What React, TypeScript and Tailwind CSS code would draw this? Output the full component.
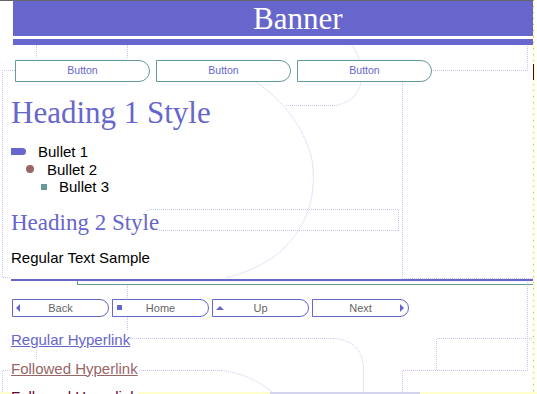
import React from "react";

const sans = { fontFamily: '"Liberation Sans", Arial, sans-serif' };
const serif = { fontFamily: '"Liberation Serif", "Times New Roman", serif' };

function Decor() {
  const s = {
    stroke: "#c6c6f6",
    strokeWidth: 1,
    strokeDasharray: "1 1",
    fill: "none",
  } as const;
  return (
    <svg
      className="absolute inset-0 z-0"
      width={537}
      height={394}
      viewBox="0 0 537 394"
    >
      <g {...s} shapeRendering="crispEdges">
        <path d="M36.5 45 V58" />
        <path d="M127.5 45 V58" />
        <path d="M15 70.5 H2.5 V277.5 H11" />
        <path d="M402.5 82 V278.5 H533" />
        <path d="M433 70.5 H527.5 V45" />
        <path d="M147.5 230.5 V209.5 H398.5 V230.5 H147.5" />
        <path d="M127.5 285 V338.5 H333" />
        <path d="M36.5 338 V370.5 M2.5 394 V370.5 H222" />
        <path d="M527.5 280 V370.5 H402.5 V394" />
        <path d="M436.5 370 V338.5 H533" />
      </g>
      <g {...s}>
        <path d="M250 78 Q300 110 312 160 Q320 215 280 252 Q258 270 225 278" />
        <path d="M286 105.5 H336 Q361 100 362 75 Q361 58 352 45" />
        <path d="M333 338.5 Q362 340 363.5 368 V394" />
        <path d="M222 370.5 Q250 374 272 392" />
      </g>
      <rect x={533} y={0} width={2} height={394} fill="#ffffcc" />
      <path
        d="M533.5 0 V394"
        stroke="#b0b0c8"
        strokeWidth={1}
        strokeDasharray="1 5"
        shapeRendering="crispEdges"
      />
      <rect x={533} y={64} width={1} height={16} fill="#660000" />
      <rect x={0} y={392} width={537} height={2} fill="#ffffcc" />
      <rect x={270} y={392} width={150} height={2} fill="#d4d4ee" />
    </svg>
  );
}

function TopButton() {
  return (
    <div
      className="w-[135px] h-[22px] border border-[#669999] rounded-r-[11px] bg-white flex items-center justify-center text-[10.5px] text-[#6666cc]"
      style={sans}
    >
      Button
    </div>
  );
}

function NavButton({
  label,
  icon,
  iconRight,
}: {
  label: string;
  icon: React.ReactNode;
  iconRight?: boolean;
}) {
  return (
    <div
      className="w-[97px] h-[18px] border border-[#6666cc] rounded-r-[9px] bg-white grid grid-cols-[16px_1fr_16px] items-center text-[11px] text-[#666666]"
      style={sans}
    >
      <div className="flex items-center pl-[3px]">{!iconRight && icon}</div>
      <div className="text-center leading-[16px]">{label}</div>
      <div className="flex items-center justify-end pr-[4px]">
        {iconRight && icon}
      </div>
    </div>
  );
}

export default function App() {
  return (
    <div
      className="relative w-[537px] h-[394px] overflow-hidden bg-white"
      style={sans}
    >
      <Decor />
      <div className="relative z-10 flex flex-col">
        <div className="h-[1px] w-[533px] bg-[#666666]" />
        <div className="ml-[13px] w-[520px] h-[35px] bg-[#6666cc] pl-[240px]">
          <span
            className="text-[31px] leading-[35px] text-white"
            style={serif}
          >
            Banner
          </span>
        </div>
        <div className="h-[3px]" />
        <div className="ml-[13px] w-[520px] h-[6px] bg-[#6666cc]" />

        <div className="mt-[15px] ml-[15px] flex gap-[6px]">
          <TopButton />
          <TopButton />
          <TopButton />
        </div>

        <div
          className="mt-[15px] ml-[11px] self-start text-[31px] leading-[31px] text-[#6666cc]"
          style={serif}
        >
          Heading 1 Style
        </div>

        <div className="mt-[15px] flex flex-col text-[15px] leading-[17.5px] text-black">
          <div className="flex items-center h-[17.5px]">
            <div className="ml-[11px] w-[15px] h-[7px] bg-[#6666cc] rounded-r-[4px]" />
            <span className="ml-[12px]">Bullet 1</span>
          </div>
          <div className="flex items-center h-[17.5px]">
            <div className="ml-[26px] w-[8px] h-[8px] bg-[#996666] rounded-full" />
            <span className="ml-[13px]">Bullet 2</span>
          </div>
          <div className="flex items-center h-[17.5px]">
            <div className="ml-[41px] w-[6px] h-[6px] bg-[#669999]" />
            <span className="ml-[12px]">Bullet 3</span>
          </div>
        </div>

        <div
          className="mt-[15px] ml-[11px] self-start bg-white text-[23px] leading-[23px] text-[#6666cc]"
          style={serif}
        >
          Heading 2 Style
        </div>

        <div className="mt-[15px] ml-[11px] self-start text-[15px] leading-[18px] text-black">
          Regular Text Sample
        </div>

        <div className="mt-[12px] ml-[11px] w-[522px] h-[2px] bg-[#6666cc]" />
        <div className="ml-[77px] w-[456px] h-[4px] border-l border-b border-[#669999]" />

        <div className="mt-[14px] ml-[12px] flex gap-[3px]">
          <NavButton
            label="Back"
            icon={
              <div className="w-0 h-0 border-y-[4px] border-y-transparent border-r-[4px] border-r-[#6666cc]" />
            }
          />
          <NavButton
            label="Home"
            icon={<div className="ml-[1px] w-[5px] h-[5px] bg-[#6666cc]" />}
          />
          <NavButton
            label="Up"
            icon={
              <div className="w-0 h-0 border-x-[4px] border-x-transparent border-b-[4px] border-b-[#6666cc]" />
            }
          />
          <NavButton
            label="Next"
            iconRight
            icon={
              <div className="w-0 h-0 border-y-[4px] border-y-transparent border-l-[4px] border-l-[#6666cc]" />
            }
          />
        </div>

        <div className="mt-[14px] ml-[11px] self-start bg-white text-[15px] leading-[18px] text-[#6666cc] underline">
          Regular Hyperlink
        </div>
        <div className="mt-[11px] ml-[11px] self-start bg-white text-[15px] leading-[18px] text-[#996666] underline">
          Followed Hyperlink
        </div>
        <div className="mt-[10px] ml-[11px] self-start bg-white text-[15px] leading-[18px] text-[#660033] underline">
          Followed Hyperlink
        </div>
      </div>
    </div>
  );
}
